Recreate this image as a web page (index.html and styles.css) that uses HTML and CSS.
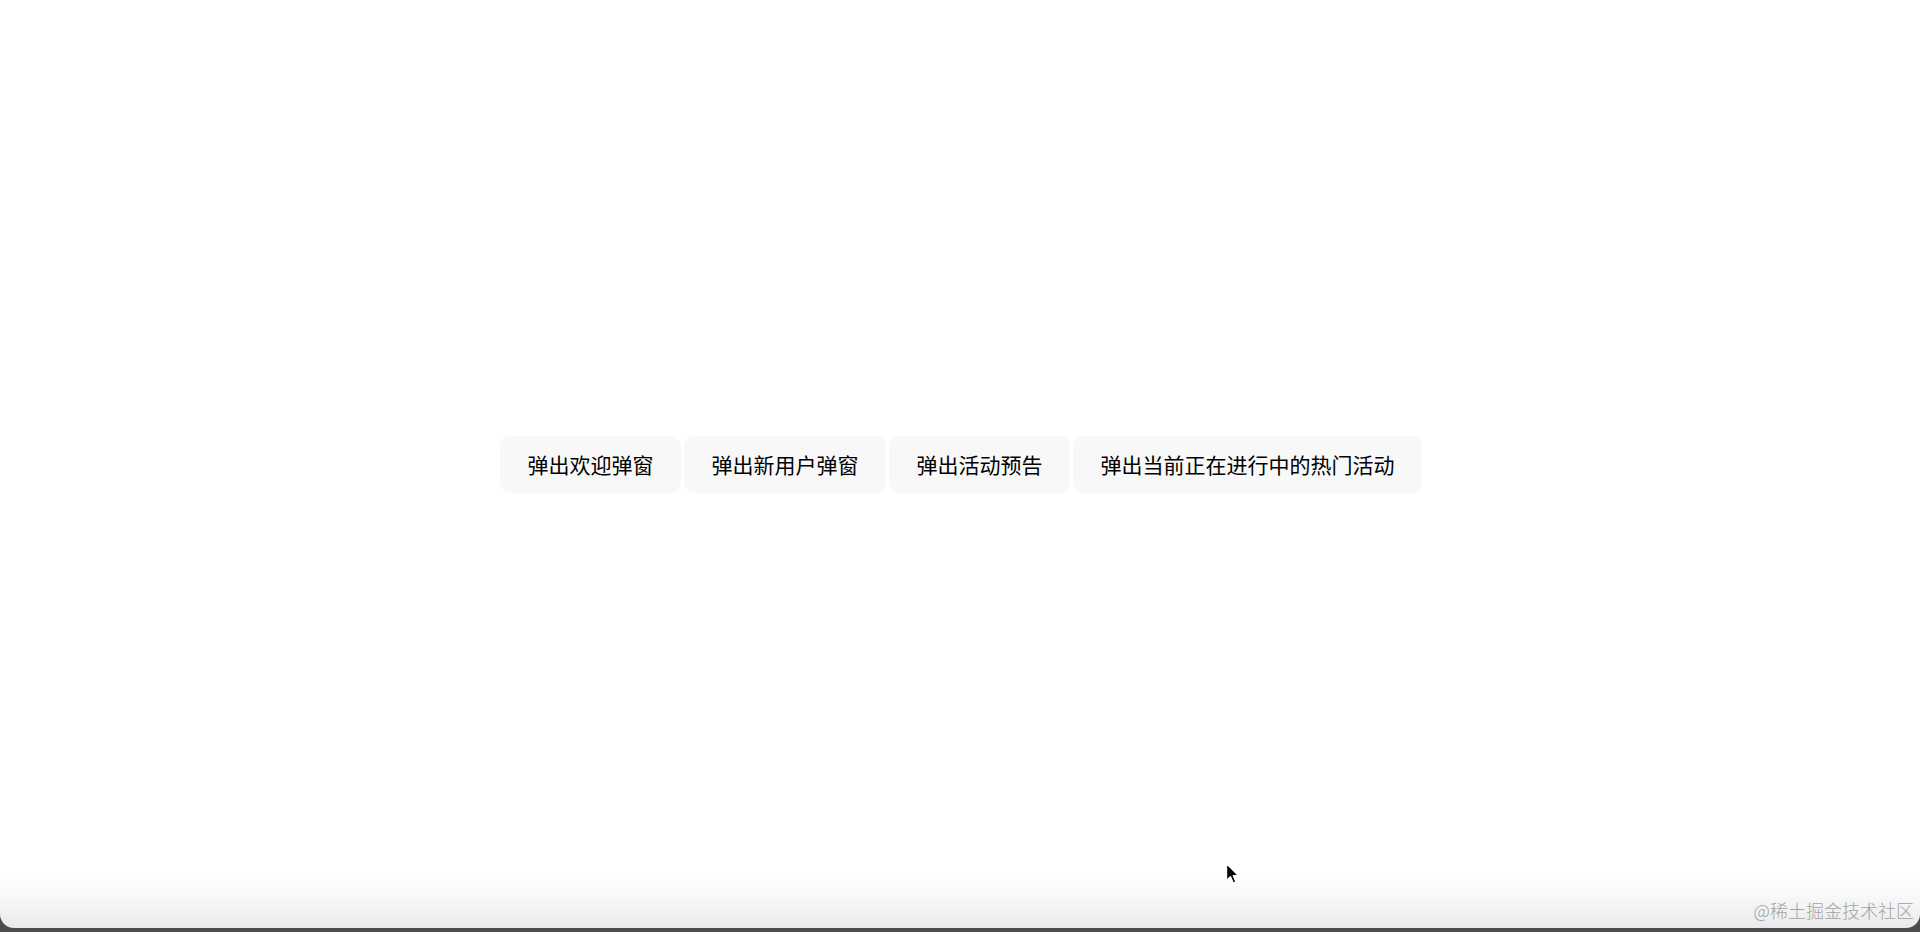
FILE: index.html
```html
<!DOCTYPE html>
<html lang="zh-CN">
<head>
<meta charset="utf-8">
<title>弹窗</title>
<link rel="stylesheet" href="styles.css">
</head>
<body>
<div class="window">
  <div class="stage">
    <div class="btn-row">
      <button class="btn">弹出欢迎弹窗</button>
      <button class="btn">弹出新用户弹窗</button>
      <button class="btn">弹出活动预告</button>
      <button class="btn">弹出当前正在进行中的热门活动</button>
    </div>
  </div>
  <svg class="cursor" width="16" height="24" viewBox="0 0 16 24" aria-hidden="true">
    <path d="M1.5 1.5 L1.5 18.5 L5.5 14.8 L8.3 21.2 L11 20 L8.3 13.8 L13.6 13.8 Z" fill="#000" stroke="#fff" stroke-width="1.4" stroke-linejoin="round"/>
  </svg>
  <div class="watermark">@稀土掘金技术社区</div>
</div>
<div class="dock-strip"></div>
</body>
</html>
```

FILE: styles.css
```css
html, body {
  margin: 0;
  padding: 0;
  height: 932px;
  overflow: hidden;
}

body {
  background: #4d4d4d;
  display: flex;
  flex-direction: column;
  font-family: "Noto Sans CJK SC", "Noto Sans", sans-serif;
}

.window {
  position: relative;
  height: 928px;
  flex: 0 0 928px;
  border-radius: 0 0 14px 14px;
  background: linear-gradient(to bottom, #ffffff 0, #ffffff 872px, #f8f8f8 898px, #f0f0f0 915px, #e9e9e9 928px);
  display: flex;
  flex-direction: column;
}

.stage {
  flex: 1;
  display: flex;
  align-items: center;
  justify-content: center;
}

.btn-row {
  display: flex;
  gap: 3px;
  margin-left: 2px;
}

.btn {
  height: 57px;
  padding: 0 27.5px;
  border: none;
  border-radius: 10px;
  background: #f8f8f8;
  color: #000;
  font-family: "Noto Sans CJK SC", "Noto Sans", sans-serif;
  font-size: 21px;
  font-weight: 400;
  line-height: 57px;
  white-space: nowrap;
  cursor: pointer;
}

.cursor {
  position: absolute;
  left: 1225px;
  top: 862px;
}

.watermark {
  position: absolute;
  right: 6px;
  bottom: 9px;
  font-family: "Noto Sans CJK SC", sans-serif;
  font-size: 18px;
  font-weight: 300;
  color: #a3a3a3;
  line-height: 1;
}

.dock-strip {
  flex: 1;
  background: #4d4d4d;
}
```
